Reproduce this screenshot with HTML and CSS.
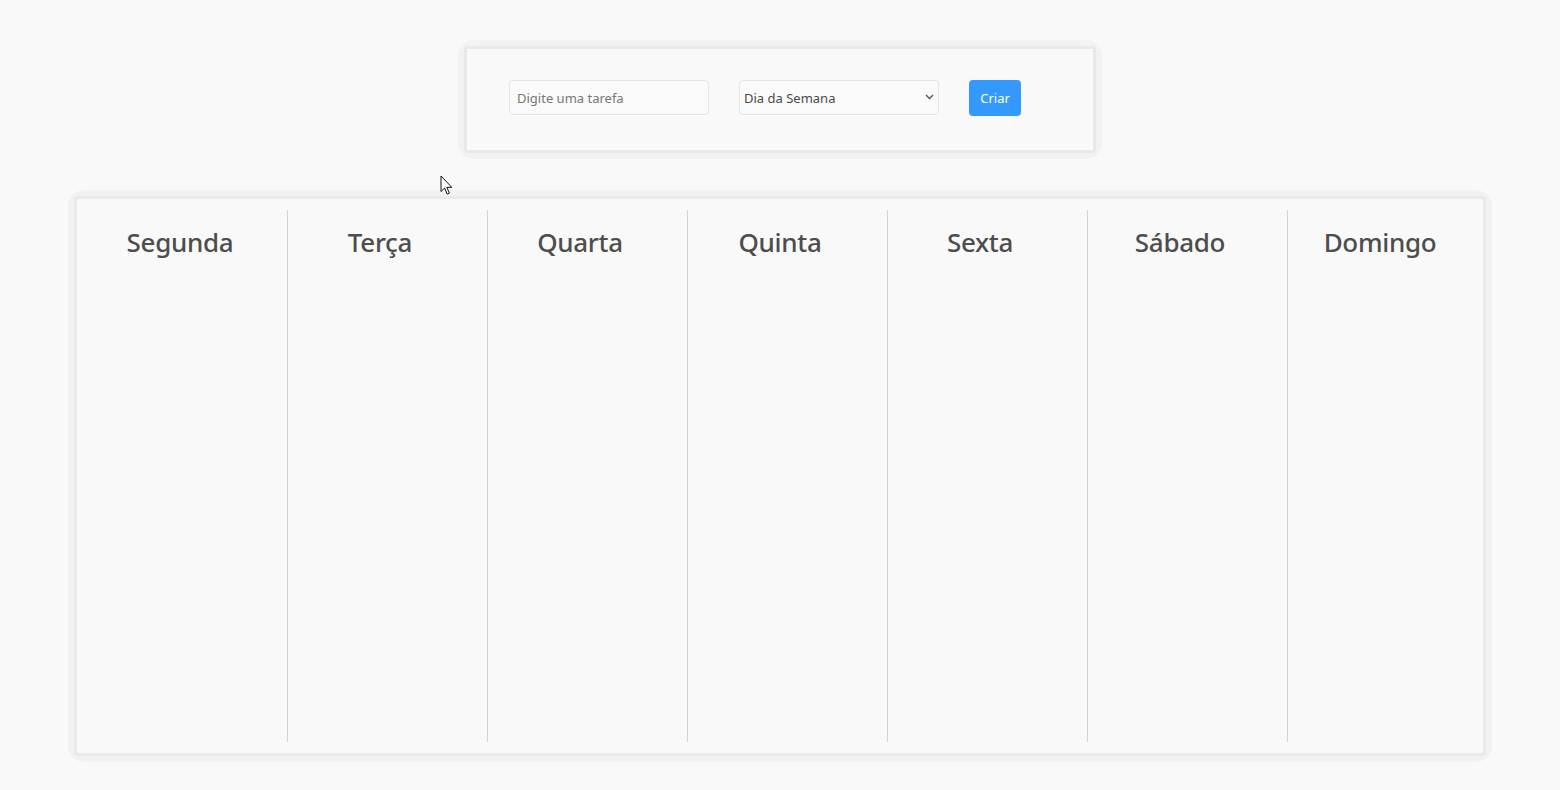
FILE: index.html
```html
<!DOCTYPE html>
<html lang="pt-BR">
<head>
<meta charset="utf-8">
<title>Tarefas da Semana</title>
<link rel="stylesheet" href="styles.css">
</head>
<body>
<div class="frame frame-form">
  <form class="panel form-panel" onsubmit="return false">
    <input class="field" type="text" placeholder="Digite uma tarefa">
    <div class="select-wrap">
      <select class="field select">
        <option>Dia da Semana</option>
        <option>Segunda</option>
        <option>Terça</option>
        <option>Quarta</option>
        <option>Quinta</option>
        <option>Sexta</option>
        <option>Sábado</option>
        <option>Domingo</option>
      </select>
      <svg class="chevron" width="9" height="6" viewBox="0 0 9 6"><path d="M1 1l3.5 3.5L8 1" fill="none" stroke="#555" stroke-width="1.4"/></svg>
    </div>
    <button class="btn" type="submit">Criar</button>
  </form>
</div>

<div class="frame frame-board">
  <div class="panel board">
    <section class="day first"><h2>Segunda</h2></section>
    <section class="day"><h2>Terça</h2></section>
    <section class="day"><h2>Quarta</h2></section>
    <section class="day"><h2>Quinta</h2></section>
    <section class="day"><h2>Sexta</h2></section>
    <section class="day"><h2>Sábado</h2></section>
    <section class="day"><h2>Domingo</h2></section>
  </div>
</div>

<svg class="cursor" width="14" height="21" viewBox="0 0 14 21"><path d="M1 1v15.5l3.6-3.4 2.6 6 2.2-1-2.6-5.8h5z" fill="#fff" stroke="#111" stroke-width="1" stroke-linejoin="round"/></svg>
</body>
</html>
```

FILE: styles.css
```css
html, body {
  margin: 0;
  padding: 0;
  background: #f9f9f9;
  font-family: "Noto Sans", "Open Sans", "Liberation Sans", sans-serif;
  color: #444;
}

body {
  position: relative;
  min-height: 790px;
  display: flex;
  flex-direction: column;
  align-items: center;
}

.frame {
  background: #f2f2f2;
  border-radius: 16px;
  padding: 6px;
  box-sizing: border-box;
}

.panel {
  background: #f9f9f9;
  border: 3px solid #e9e9e9;
  border-radius: 3px;
  box-sizing: border-box;
}

.frame-form {
  margin-top: 40px;
  width: 644px;
  height: 119px;
}

.form-panel {
  height: 107px;
  margin: 0;
  display: flex;
  align-items: flex-start;
  gap: 30px;
  padding: 31px 0 0 42px;
}

.field {
  width: 200px;
  height: 35px;
  box-sizing: border-box;
  border: 1px solid #e5e5e5;
  border-radius: 4px;
  background: #fafafa;
  font-family: inherit;
  font-size: 13px;
  color: #4a4a4a;
  padding: 0 7px;
  outline: none;
}

.field::placeholder {
  color: #777;
}

.select-wrap {
  position: relative;
  width: 200px;
  height: 35px;
}

.select {
  -webkit-appearance: none;
  appearance: none;
  padding: 0 4px;
}

.chevron {
  position: absolute;
  right: 5px;
  top: 14px;
  pointer-events: none;
}

.btn {
  height: 36px;
  width: 52px;
  border: 0;
  border-radius: 4px;
  background: #3399ff;
  color: #fff;
  font-family: inherit;
  font-size: 13px;
  padding: 0;
  cursor: pointer;
}

.frame-board {
  margin-top: 31px;
  width: 1424px;
  height: 572px;
}

.board {
  height: 560px;
  padding: 11px 3px;
  display: grid;
  grid-template-columns: repeat(7, 200px);
}

.day {
  background: linear-gradient(to right, transparent 7px, #d2d2d2 7px, #d2d2d2 8px, transparent 8px);
}

.day.first {
  background: none;
}

.day h2 {
  margin: 14px 0 0;
  text-align: center;
  font-size: 26px;
  font-weight: 500;
  color: #4d4d4d;
  letter-spacing: -0.3px;
}

.cursor {
  position: absolute;
  left: 440px;
  top: 175px;
}
```
